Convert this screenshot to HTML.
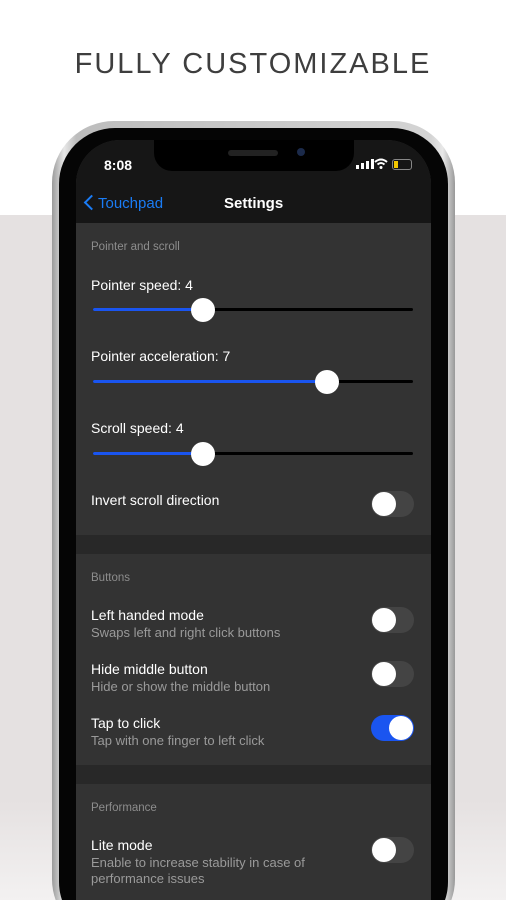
<!DOCTYPE html>
<html style="overflow:hidden;height:900px"><head><style>
body{margin:0;width:506px;height:900px;overflow:hidden;position:relative;background:#fff;font-family:"Liberation Sans",sans-serif}
.bg{position:absolute;left:0;top:215px;width:506px;height:600px;background:#e5e1e1}
.bg2{position:absolute;left:0;top:800px;width:506px;height:100px;background:linear-gradient(#e5e1e1,#f3f1f1)}
h1{position:absolute;top:48px;left:0;width:506px;text-align:center;margin:0;font-weight:normal;font-size:29px;letter-spacing:2px;color:#3e3e3e}
.clip{position:absolute;left:0;top:0;width:506px;height:900px;overflow:hidden}
.frame{position:absolute;left:52px;top:121px;width:403px;height:820px;border-radius:62px;background:linear-gradient(90deg,#9a9a9a,#e8e8e8 3%,#bdbdbd 6%,#d4d4d4 94%,#e8e8e8 97%,#999)}
.inner{position:absolute;left:59px;top:128px;width:389px;height:810px;border-radius:56px;background:#050505}
.screen{position:absolute;left:76px;top:140px;width:355px;height:760px;border-radius:44px 44px 0 0;background:#333;overflow:hidden}
.nav{position:absolute;left:0;top:0;width:355px;height:83px;background:#161616}
.notch{position:absolute;left:78px;top:0;width:200px;height:31px;background:#000;border-radius:0 0 18px 18px}
.w{color:#fff;position:absolute;font-size:14px}
.g{color:#8d8d8d;position:absolute;font-size:11.5px}
.s{color:#9a9a9a;position:absolute;font-size:13px}
.track{position:absolute;left:17px;width:320px;height:3px;background:#000;border-radius:2px}
.fill{position:absolute;left:0;top:0;height:3px;background:#1a55f0;border-radius:2px}
.knob{position:absolute;width:24px;height:24px;border-radius:50%;background:#fff;top:-10.5px}
.tg{position:absolute;left:295px;width:43px;height:26px;border-radius:13px;background:#444}
.tg::after{content:"";position:absolute;left:1px;top:1px;width:24px;height:24px;border-radius:50%;background:#fff}
.tg.on{background:#1a55f0}.tg.on::after{left:18px}
.sep{position:absolute;left:0;width:355px;height:19px;background:#282828}
</style></head><body>
<div class="clip">
<div class="bg"></div><div class="bg2"></div>
<h1>FULLY CUSTOMIZABLE</h1>
<div class="frame"></div><div class="inner"></div>
<div class="screen">
<div class="nav">
<div class="notch"><div style="position:absolute;left:74px;top:10px;width:50px;height:6px;border-radius:3px;background:#222"></div><div style="position:absolute;left:143px;top:8px;width:8px;height:8px;border-radius:50%;background:#1b2a4a"></div></div>
<div class="w" style="left:28px;top:17px;font-weight:bold;font-size:14px">8:08</div>
<div style="position:absolute;left:280px;top:19px;display:flex;gap:2px;align-items:flex-end">
<span style="width:3px;height:4px;background:#fff"></span><span style="width:3px;height:6px;background:#fff"></span><span style="width:3px;height:8px;background:#fff"></span><span style="width:3px;height:10px;background:#fff"></span></div>
<svg style="position:absolute;left:298px;top:18px" width="14" height="11" viewBox="0 0 14 11"><path d="M1 4 Q7 -1 13 4" stroke="#fff" stroke-width="2" fill="none"/><path d="M3.5 6.5 Q7 3.5 10.5 6.5" stroke="#fff" stroke-width="2" fill="none"/><circle cx="7" cy="9.5" r="1.5" fill="#fff"/></svg>
<div style="position:absolute;left:316px;top:19px;width:18px;height:9px;border:1px solid #888;border-radius:3px"><div style="width:4px;height:7px;margin:1px;background:#f5c800"></div></div>
<div style="position:absolute;left:10px;top:57px;width:9px;height:9px;border-left:2.5px solid #1a7cf5;border-bottom:2.5px solid #1a7cf5;transform:rotate(45deg)"></div>
<div style="position:absolute;left:22px;top:55px;color:#1a7cf5;font-size:15px">Touchpad</div>
<div class="w" style="left:148px;top:55px;font-size:15px;font-weight:bold">Settings</div>
</div>
<div class="g" style="left:15px;top:101px">Pointer and scroll</div>
<div class="w" style="left:15px;top:137px">Pointer speed: 4</div>
<div class="track" style="top:168px"><div class="fill" style="width:110px"></div><div class="knob" style="left:98px"></div></div>
<div class="w" style="left:15px;top:208px">Pointer acceleration: 7</div>
<div class="track" style="top:240px"><div class="fill" style="width:234px"></div><div class="knob" style="left:222px"></div></div>
<div class="w" style="left:15px;top:280px">Scroll speed: 4</div>
<div class="track" style="top:312px"><div class="fill" style="width:110px"></div><div class="knob" style="left:98px"></div></div>
<div class="w" style="left:15px;top:352px">Invert scroll direction</div>
<div class="tg" style="top:351px"></div>
<div class="sep" style="top:395px"></div>
<div class="g" style="left:15px;top:432px">Buttons</div>
<div class="w" style="left:15px;top:467px">Left handed mode</div><div class="s" style="left:15px;top:485px">Swaps left and right click buttons</div>
<div class="tg" style="top:467px"></div>
<div class="w" style="left:15px;top:521px">Hide middle button</div><div class="s" style="left:15px;top:539px">Hide or show the middle button</div>
<div class="tg" style="top:521px"></div>
<div class="w" style="left:15px;top:575px">Tap to click</div><div class="s" style="left:15px;top:593px">Tap with one finger to left click</div>
<div class="tg on" style="top:575px"></div>
<div class="sep" style="top:625px"></div>
<div class="g" style="left:15px;top:662px">Performance</div>
<div class="w" style="left:15px;top:697px">Lite mode</div><div class="s" style="left:15px;top:715px;line-height:16px">Enable to increase stability in case of<br>performance issues</div>
<div class="tg" style="top:697px"></div>
</div>
</div>
</body></html>
